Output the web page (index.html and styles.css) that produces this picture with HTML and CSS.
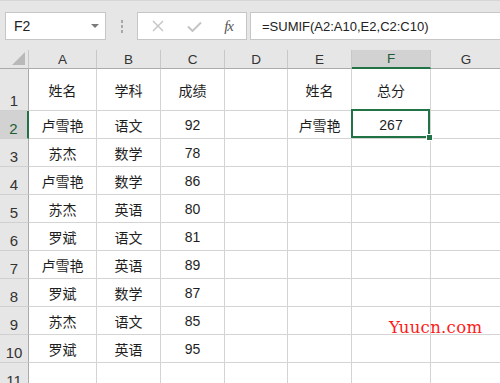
FILE: index.html
```html
<!DOCTYPE html>
<html>
<head>
	<title>SUMIF - Sheet1</title>
	<link rel="stylesheet" href="styles.css">
</head>
<body>
	<div class="app">
		<div class="formula-bar">
			<div class="name-box">
				<span>F2</span>
				<span class="drop-arrow"></span>
			</div>
			<div class="grip"><i></i><i></i><i></i></div>
			<div class="fx-buttons">
				<svg class="btn-icon" width="12" height="12" viewBox="0 0 12 12">
					<path d="M1 1 L11 11 M11 1 L1 11" stroke="#c4c4c4" stroke-width="1.4" fill="none"/>
				</svg>
				<svg class="btn-icon" width="15" height="11" viewBox="0 0 15 11">
					<path d="M1 5.5 L5.5 10 L14 1.5" stroke="#c4c4c4" stroke-width="2" fill="none"/>
				</svg>
				<span class="fx">fx</span>
			</div>
			<div class="formula">=SUMIF(A2:A10,E2,C2:C10)</div>
		</div>

		<div class="sheet" id="sheet"></div>

		<div class="watermark">Yuucn.com</div>
	</div>

	<script>
		// Sheet contents, row by row (columns A to G)
		const rows = [
			["姓名", "学科", "成绩", "", "姓名", "总分"],
			["卢雪艳", "语文", "92", "", "卢雪艳", "267"],
			["苏杰", "数学", "78"],
			["卢雪艳", "数学", "86"],
			["苏杰", "英语", "80"],
			["罗斌", "语文", "81"],
			["卢雪艳", "英语", "89"],
			["罗斌", "数学", "87"],
			["苏杰", "语文", "85"],
			["罗斌", "英语", "95"],
			[]
		];
		const columns = ["A", "B", "C", "D", "E", "F", "G"];
		const sheet = document.getElementById("sheet");

		// Corner cell with the select-all triangle
		const corner = document.createElement("div");
		corner.className = "corner";
		corner.innerHTML = '<svg width="13" height="13" viewBox="0 0 13 13"><polygon points="13,0 13,13 0,13" fill="#b9b9b9"/></svg>';
		sheet.appendChild(corner);

		// Column headers
		columns.forEach(letter => {
			const head = document.createElement("div");
			head.classList.add("col-head");
			if (letter === "F") head.classList.add("active");
			head.textContent = letter;
			sheet.appendChild(head);
		});

		// Rows
		rows.forEach((row, r) => {
			const rowHead = document.createElement("div");
			rowHead.classList.add("row-head");
			if (r === 1) rowHead.classList.add("active");
			rowHead.textContent = r + 1;
			sheet.appendChild(rowHead);

			columns.forEach((letter, c) => {
				const cell = document.createElement("div");
				cell.classList.add("cell");
				cell.textContent = row[c] || "";
				if (letter === "F" && r === 1) {
					cell.classList.add("selected");
					const handle = document.createElement("span");
					handle.className = "fill-handle";
					cell.appendChild(handle);
				}
				sheet.appendChild(cell);
			});
		});
	</script>
</body>
</html>
```

FILE: styles.css
```css
* {
	margin: 0;
	padding: 0;
	box-sizing: border-box;
}
body {
	background-color: #fff;
	font-family: 'Liberation Sans', 'Noto Sans CJK SC', Arial, sans-serif;
	color: #1e1e1e;
}
.app {
	position: relative;
	width: 500px;
	height: 383px;
	overflow: hidden;
}

/* Formula bar */
.formula-bar {
	display: flex;
	height: 50px;
	padding: 11px 0 10px 5px;
	background-color: #e6e6e6;
	border-top: 1px solid #d6d6d6;
}
.name-box {
	width: 101px;
	display: flex;
	align-items: center;
	justify-content: space-between;
	padding: 0 6px 0 8px;
	background-color: #fff;
	border: 1px solid #c6c6c6;
	font-size: 14px;
	color: #222;
}
.drop-arrow {
	width: 0;
	height: 0;
	border-left: 4px solid transparent;
	border-right: 4px solid transparent;
	border-top: 4px solid #7a7a7a;
}
.grip {
	width: 31px;
	display: flex;
	flex-direction: column;
	align-items: center;
	justify-content: center;
	gap: 2px;
}
.grip i {
	display: block;
	width: 2px;
	height: 3px;
	background-color: #a8a8a8;
}
.fx-buttons {
	width: 110px;
	display: flex;
	align-items: center;
	justify-content: space-between;
	padding: 0 13px 0 14px;
	background-color: #fff;
	border: 1px solid #c6c6c6;
}
.fx {
	font-family: 'Liberation Serif', serif;
	font-style: italic;
	font-size: 15px;
	color: #555;
	letter-spacing: -1px;
}
.formula {
	flex: 1;
	margin-left: 3px;
	margin-right: -1px;
	display: flex;
	align-items: center;
	padding-left: 11px;
	background-color: #fff;
	border: 1px solid #c6c6c6;
	font-size: 13px;
	color: #222;
}

/* Grid: row header, then columns A to G */
.sheet {
	display: grid;
	grid-template-columns: 29px 68px 64px 64px 63px 64px 79px 71px;
	grid-template-rows: 19px 42px repeat(10, 28px);
	width: 502px;
}
.corner {
	display: flex;
	align-items: flex-end;
	justify-content: flex-end;
	padding: 0 3px 3px 0;
	background-color: #e6e6e6;
	border-right: 1px solid #c6c6c6;
	border-bottom: 1px solid #ababab;
}
.col-head {
	display: flex;
	align-items: center;
	justify-content: center;
	background-color: #e6e6e6;
	border-right: 1px solid #c8c8c8;
	border-bottom: 1px solid #ababab;
	font-size: 13.5px;
	color: #333;
}
.col-head.active {
	background-color: #d2d2d2;
	border-bottom: 2px solid #217346;
	color: #1f5c36;
}
.row-head {
	display: flex;
	align-items: flex-end;
	justify-content: center;
	padding-bottom: 1px;
	background-color: #e6e6e6;
	border-right: 1px solid #ababab;
	border-bottom: 1px solid #d0d0d0;
	font-size: 15px;
	color: #333;
}
.row-head.active {
	background-color: #d2d2d2;
	border-right: 2px solid #217346;
	color: #1f5c36;
}
.cell {
	position: relative;
	display: flex;
	align-items: center;
	justify-content: center;
	border-right: 1px solid #d4d4d4;
	border-bottom: 1px solid #d4d4d4;
	font-size: 14px;
}
.cell.selected::after {
	content: "";
	position: absolute;
	top: -2px;
	left: -1px;
	right: 0;
	bottom: 0;
	border: 2px solid #217346;
}
.fill-handle {
	position: absolute;
	right: -3px;
	bottom: -3px;
	width: 7px;
	height: 7px;
	background-color: #217346;
	border: 1px solid #fff;
	z-index: 1;
}

/* Watermark */
.watermark {
	position: absolute;
	left: 389px;
	top: 318px;
	font-family: 'DejaVu Serif', serif;
	font-size: 16.5px;
	line-height: 19px;
	color: #ff1a1a;
	letter-spacing: 0.3px;
}
```
